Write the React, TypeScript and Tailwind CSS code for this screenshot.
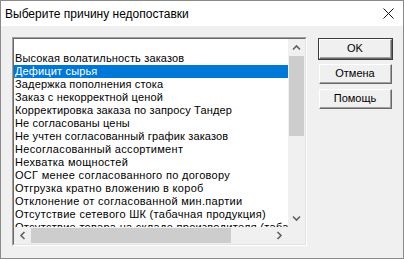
import React from 'react';

const reasons = [
  '',
  'Высокая волатильность заказов',
  'Дефицит сырья',
  'Задержка пополнения стока',
  'Заказ с некорректной ценой',
  'Корректировка заказа по запросу Тандер',
  'Не согласованы цены',
  'Не учтен согласованный график заказов',
  'Несогласованный ассортимент',
  'Нехватка мощностей',
  'ОСГ менее согласованного по договору',
  'Отгрузка кратно вложению в короб',
  'Отклонение от согласованной мин.партии',
  'Отсутствие сетевого ШК (табачная продукция)',
  'Отсутствие товара на складе производителя (табачная продукция)',
];

const Chevron = ({ dir }: { dir: 'up' | 'down' | 'left' | 'right' }) => {
  const rot = { up: 0, right: 90, down: 180, left: 270 }[dir];
  return (
    <svg width="9" height="9" viewBox="0 0 9 9" style={{ transform: `rotate(${rot}deg)` }}>
      <path d="M1 6.5 L4.5 3 L8 6.5" fill="none" stroke="#606060" strokeWidth="1.6" />
    </svg>
  );
};

const Button = ({ label, primary }: { label: string; primary?: boolean }) => (
  <div
    className={`h-[22px] w-[75px] ${primary ? 'border border-[#3c3c3c]' : 'border border-transparent'}`}
  >
    <div className="h-full w-full border-t border-l border-t-white border-l-white border-b border-r border-b-[#696969] border-r-[#696969] bg-[#f0f0f0]">
      <div className="flex h-full w-full items-center justify-center border-b border-r border-b-[#a0a0a0] border-r-[#a0a0a0] text-[11px] leading-none text-black">
        {label}
      </div>
    </div>
  </div>
);

export default function App() {
  return (
    <div
      className="h-[259px] w-[404px] border border-[#8a8a8a] bg-[#f0f0f0] text-black"
      style={{ fontFamily: '"Liberation Sans", Arial, sans-serif' }}
    >
      <div className="flex h-[25px] items-center justify-between bg-white pl-[4px] pr-[9px]">
        <span className="text-[12px]">Выберите причину недопоставки</span>
        <svg width="11" height="11" viewBox="0 0 11 11">
          <path d="M0.5 0.5 L10.5 10.5 M10.5 0.5 L0.5 10.5" stroke="#111" strokeWidth="1" />
        </svg>
      </div>

      <div className="flex pl-[11px] pt-[11px]">
        <div className="h-[209px] w-[295px] border border-t-[#a0a0a0] border-l-[#a0a0a0] border-b-white border-r-white">
          <div className="grid h-full w-full grid-cols-[1fr_17px] grid-rows-[1fr_17px] border border-t-[#696969] border-l-[#696969] border-b-[#e3e3e3] border-r-[#e3e3e3] bg-white">
            <div className="overflow-hidden text-[11px] leading-[13px]">
              {reasons.map((r, i) => (
                <div
                  key={i}
                  className={`h-[13px] whitespace-nowrap pl-[1px] ${i === 2 ? 'bg-[#0078d7] text-white' : ''} ${i >= 8 ? 'tracking-[0.3px]' : 'tracking-[0.15px]'}`}
                >
                  {r}
                </div>
              ))}
            </div>
            <div className="flex flex-col bg-[#f0f0f0]">
              <div className="flex h-[17px] items-center justify-center">
                <Chevron dir="up" />
              </div>
              <div className="mx-[1px] h-[80px] bg-[#cdcdcd]" />
              <div className="flex-1" />
              <div className="flex h-[17px] items-center justify-center">
                <Chevron dir="down" />
              </div>
            </div>
            <div className="flex items-stretch bg-[#f0f0f0]">
              <div className="flex w-[17px] items-center justify-center">
                <Chevron dir="left" />
              </div>
              <div className="my-[1px] w-[200px] bg-[#cdcdcd]" />
              <div className="flex-1" />
              <div className="flex w-[17px] items-center justify-center">
                <Chevron dir="right" />
              </div>
            </div>
            <div className="bg-[#f0f0f0]" />
          </div>
        </div>

        <div className="ml-[11px] flex flex-col gap-[3px] pt-[1px]">
          <Button label="OK" primary />
          <Button label="Отмена" />
          <Button label="Помощь" />
        </div>
      </div>
    </div>
  );
}
